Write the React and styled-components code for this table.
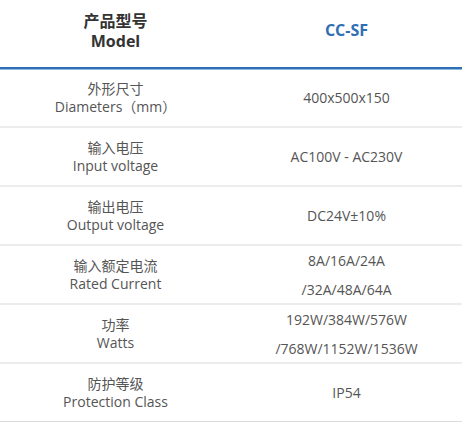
import styled, { createGlobalStyle } from "styled-components";

const Global = createGlobalStyle`
  body {
    margin: 0;
    background: #fff;
    font-family: "Open Sans", "Noto Sans CJK SC", sans-serif;
  }
`

const Table = styled.div`
  width: 462px;
  display: flex;
  flex-direction: column;
`

const HeadRow = styled.div`
  display: grid;
  grid-template-columns: 1fr 1fr;
  height: 67px;
  border-bottom: 2px solid #2f6fb3;
  box-shadow: 0 1px 0 #8fb8e2;
`

const HeadCell = styled.div`
  display: flex;
  flex-direction: column;
  align-items: center;
  justify-content: center;
  font-size: 16px;
  font-weight: 700;
  line-height: 20px;
  color: ${p => (p.$blue ? "#2f6db5" : "#333")};
  padding-bottom: ${p => (p.$blue ? "8px" : "6px")};
`

const Row = styled.div`
  display: grid;
  grid-template-columns: 1fr 1fr;
  height: 57px;
  border-bottom: 2px solid ${p => (p.$last ? "#dcdcdc" : "#ececec")};
`

const Cell = styled.div`
  display: flex;
  flex-direction: column;
  align-items: center;
  justify-content: center;
  font-size: 14px;
  line-height: ${p => (p.$gap ? "29px" : "18px")};
  color: #555;
  text-align: center;
`

const rows = [
  { zh: "外形尺寸", en: "Diameters（mm）", val: ["400x500x150"] },
  { zh: "输入电压", en: "Input voltage", val: ["AC100V - AC230V"] },
  { zh: "输出电压", en: "Output voltage", val: ["DC24V±10%"] },
  { zh: "输入额定电流", en: "Rated Current", val: ["8A/16A/24A", "/32A/48A/64A"] },
  { zh: "功率", en: "Watts", val: ["192W/384W/576W", "/768W/1152W/1536W"] },
  { zh: "防护等级", en: "Protection Class", val: ["IP54"] },
]

export default function App() {
  return (
    <>
      <Global />
      <Table>
        <HeadRow>
          <HeadCell>
            <span>产品型号</span>
            <span>Model</span>
          </HeadCell>
          <HeadCell $blue>CC-SF</HeadCell>
        </HeadRow>
        {rows.map((r, i) => (
          <Row key={r.zh} $last={i === rows.length - 1}>
            <Cell>
              <span>{r.zh}</span>
              <span>{r.en}</span>
            </Cell>
            <Cell $gap={r.val.length > 1}>
              {r.val.map(v => (
                <span key={v}>{v}</span>
              ))}
            </Cell>
          </Row>
        ))}
      </Table>
    </>
  )
}
